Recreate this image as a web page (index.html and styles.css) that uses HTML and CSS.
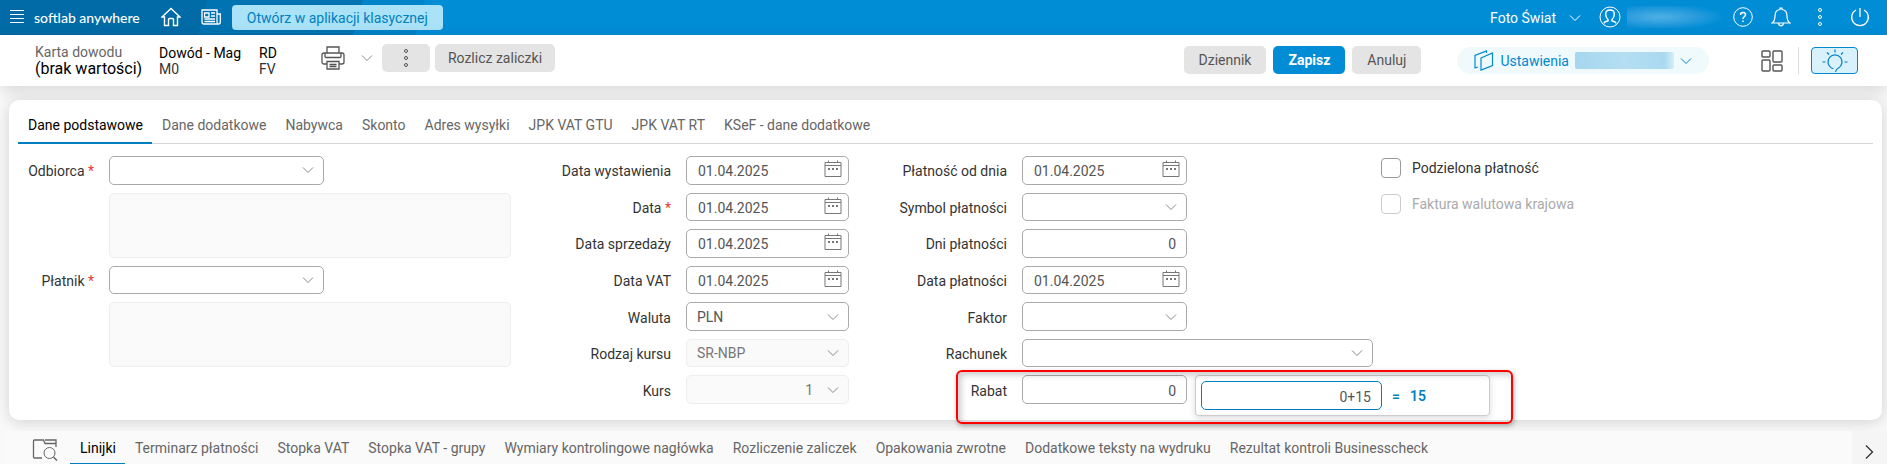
FILE: index.html
```
<!DOCTYPE html>
<html lang="pl">
<head>
    <meta charset="UTF-8">
    <meta name="viewport" content="width=device-width, initial-scale=1.0">
    <title>Karta dowodu - softlab anywhere</title>
    <link rel="stylesheet" href="styles.css">
</head>
<body>
    <!-- Shared icons -->
    <svg class="sprite" aria-hidden="true">
        <symbol id="chevron" viewBox="0 0 12 8"><path d="M1 1.5 L6 6.5 L11 1.5"/></symbol>
        <symbol id="calendar" viewBox="0 0 18 18">
            <path d="M1 2.5 H17 V16.5 H1 Z M1 5.5 H17 M4.5 0.5 V3 M13.5 0.5 V3"/>
            <path d="M4 9 H6 M8 9 H10 M12 9 H14" stroke-width="2"/>
        </symbol>
        <symbol id="dots" viewBox="0 0 6 20">
            <circle cx="3" cy="3" r="1.5"/><circle cx="3" cy="10" r="1.5"/><circle cx="3" cy="17" r="1.5"/>
        </symbol>
    </svg>

    <header class="topbar">
        <button class="icon-btn menu-btn" aria-label="Menu">
            <svg width="14" height="14" viewBox="0 0 14 14"><path d="M0 0.5 H14 M0 4.5 H14 M0 8.5 H14 M0 12.5 H14"/></svg>
        </button>
        <span class="brand">softlab anywhere</span>
        <button class="icon-btn home-btn" aria-label="Start">
            <svg width="20" height="20" viewBox="0 0 20 20"><path stroke-width="1.4" d="M1 10 L10 1.5 L19 10 H16.5 V18.5 H12.5 V12.5 Q12.5 11.5 11.5 11.5 H8.5 Q7.5 11.5 7.5 12.5 V18.5 H3.5 V10 Z"/></svg>
        </button>
        <button class="icon-btn news-btn" aria-label="Aktualności">
            <svg width="20" height="16" viewBox="0 0 20 16"><path stroke-width="1.3" d="M16 12 V1 H1 V13 Q1 15 3 15 H17.5 Q19.3 15 19.3 13 V5 H16 V13 Q16 15 17.5 15 M3.5 4 H8 V8 H3.5 Z M10 4 H14 M10 7 H14 M3.5 10 H14 M3.5 12.5 H14"/></svg>
        </button>
        <button class="classic-btn">Otwórz w aplikacji klasycznej</button>

        <div class="topbar-right">
            <button class="company-btn">Foto Świat <svg class="chevron"><use href="#chevron"/></svg></button>
            <button class="icon-btn user-btn" aria-label="Użytkownik">
                <svg width="22" height="22" viewBox="0 0 22 22"><circle cx="11" cy="11" r="10"/><path stroke-width="1.4" d="M5 17.5 Q5 16 7 15.5 L9 15 V13.5 Q6.7 11.5 6.7 8 Q6.7 4 11 4 Q15.3 4 15.3 8 Q15.3 11.5 13 13.5 V15 L15 15.5 Q17 16 17 17.5"/></svg>
                <span class="blurred user-name"></span>
            </button>
            <button class="icon-btn" aria-label="Pomoc">
                <svg width="20" height="20" viewBox="0 0 20 20"><circle cx="10" cy="10" r="9.3"/><path stroke-width="1.5" d="M7.5 8 Q7.5 5.5 10 5.5 Q12.5 5.5 12.5 7.7 Q12.5 9 11 10 Q10 10.8 10 12 M10 13.5 V15"/></svg>
            </button>
            <button class="icon-btn" aria-label="Powiadomienia">
                <svg width="20" height="20" viewBox="0 0 20 20"><path stroke-width="1.2" d="M1 16 Q4 14 4 9 Q4 3 9 2.5 V1 H11 V2.5 Q16 3 16 9 Q16 14 19 16 Z M7.5 16.5 Q8 18.8 10 18.8 Q12 18.8 12.5 16.5"/></svg>
            </button>
            <button class="icon-btn more-btn" aria-label="Więcej">
                <svg width="6" height="20"><use href="#dots"/></svg>
            </button>
            <button class="icon-btn" aria-label="Wyloguj">
                <svg width="20" height="20" viewBox="0 0 20 20"><path stroke-width="1.3" d="M6 3 A8.3 8.3 0 1 0 14 3 M10 1 V10"/></svg>
            </button>
        </div>
    </header>

    <div class="doc-header">
        <div class="doc-title">
            <span class="muted">Karta dowodu</span>
            <h1>(brak wartości)</h1>
        </div>
        <div class="doc-info">
            <strong>Dowód - Mag</strong>
            <span>M0</span>
        </div>
        <div class="doc-info">
            <strong>RD</strong>
            <span>FV</span>
        </div>
        <div class="doc-tools">
            <button class="icon-btn print-btn" aria-label="Drukuj">
                <svg width="24" height="24" viewBox="0 0 24 24"><path stroke-width="1.3" d="M6 7 V1 H18 V7 M6 18 H3 Q1 18 1 16 V9 Q1 7 3 7 H21 Q23 7 23 9 V16 Q23 18 21 18 H18 M4 7 V10.5 Q4 11.5 5 11.5 H19 Q20 11.5 20 10.5 V7 M6 15.5 H18 V23 H6 Z M8.5 18.5 H15.5 M8.5 20.5 H15.5"/></svg>
            </button>
            <button class="icon-btn print-more" aria-label="Opcje drukowania"><svg class="chevron"><use href="#chevron"/></svg></button>
            <button class="btn dots-btn" aria-label="Więcej akcji"><svg width="6" height="20"><use href="#dots"/></svg></button>
            <button class="btn settle-btn">Rozlicz zaliczki</button>
        </div>
        <div class="doc-actions">
            <button class="btn">Dziennik</button>
            <button class="btn btn-primary">Zapisz</button>
            <button class="btn">Anuluj</button>
        </div>
        <button class="settings-btn">
            <svg width="20" height="21" viewBox="0 0 20 21"><path stroke-width="1.2" d="M7 8 L18.5 3 V15.5 L7 20 Z M4 17 L1 18 V5.5 L12.5 1 V3"/></svg>
            Ustawienia
            <span class="blurred settings-name"></span>
            <svg class="chevron"><use href="#chevron"/></svg>
        </button>
        <button class="icon-btn layout-btn" aria-label="Układ">
            <svg width="22" height="22" viewBox="0 0 22 22"><path stroke-width="1.4" d="M2 1 H8 Q9 1 9 2 V6 Q9 7 8 7 H2 Q1 7 1 6 V2 Q1 1 2 1 Z M2 10 H8 Q9 10 9 11 V20 Q9 21 8 21 H2 Q1 21 1 20 V11 Q1 10 2 10 Z M13 1 H20 Q21 1 21 2 V11 Q21 12 20 12 H13 Q12 12 12 11 V2 Q12 1 13 1 Z M13 15 H20 Q21 15 21 16 V20 Q21 21 20 21 H13 Q12 21 12 20 V16 Q12 15 13 15 Z"/></svg>
        </button>
        <button class="hint-btn" aria-label="Podpowiedzi">
            <svg width="26" height="24" viewBox="0 0 26 24"><path stroke-width="1.2" d="M11 20 Q11 19.5 9.5 19 A7 7 0 1 1 16.5 19 Q14 20 13.5 23 M13 0.5 V3.5 M5 3.5 L7 5.5 M21 3.5 L19 5.5 M0.5 13 H3.5 M22.5 13 H25.5"/></svg>
        </button>
    </div>

    <main class="card">
        <nav class="tabs">
            <a href="#" class="active">Dane podstawowe</a>
            <a href="#">Dane dodatkowe</a>
            <a href="#">Nabywca</a>
            <a href="#">Skonto</a>
            <a href="#">Adres wysyłki</a>
            <a href="#">JPK VAT GTU</a>
            <a href="#">JPK VAT RT</a>
            <a href="#">KSeF - dane dodatkowe</a>
        </nav>

        <form class="form-columns">
            <div class="form-column parties">
                <label for="recipient">Odbiorca <em>*</em></label>
                <div class="field narrow">
                    <select id="recipient"><option></option></select>
                    <svg class="chevron"><use href="#chevron"/></svg>
                </div>
                <textarea class="address" aria-label="Dane odbiorcy" disabled></textarea>
                <label for="payer" class="payer-row">Płatnik <em>*</em></label>
                <div class="field narrow payer-row">
                    <select id="payer"><option></option></select>
                    <svg class="chevron"><use href="#chevron"/></svg>
                </div>
                <textarea class="address" aria-label="Dane płatnika" disabled></textarea>
            </div>

            <div class="form-column dates">
                <label for="issueDate">Data wystawienia</label>
                <div class="field">
                    <input type="text" id="issueDate" value="01.04.2025">
                    <svg class="calendar"><use href="#calendar"/></svg>
                </div>
                <label for="docDate">Data <em>*</em></label>
                <div class="field">
                    <input type="text" id="docDate" value="01.04.2025">
                    <svg class="calendar"><use href="#calendar"/></svg>
                </div>
                <label for="saleDate">Data sprzedaży</label>
                <div class="field">
                    <input type="text" id="saleDate" value="01.04.2025">
                    <svg class="calendar"><use href="#calendar"/></svg>
                </div>
                <label for="vatDate">Data VAT</label>
                <div class="field">
                    <input type="text" id="vatDate" value="01.04.2025">
                    <svg class="calendar"><use href="#calendar"/></svg>
                </div>
                <label for="currency">Waluta</label>
                <div class="field">
                    <select id="currency"><option>PLN</option></select>
                    <svg class="chevron"><use href="#chevron"/></svg>
                </div>
                <label for="rateType">Rodzaj kursu</label>
                <div class="field">
                    <select id="rateType" disabled><option>SR-NBP</option></select>
                    <svg class="chevron"><use href="#chevron"/></svg>
                </div>
                <label for="rate">Kurs</label>
                <div class="field">
                    <select id="rate" class="number" disabled><option>1</option></select>
                    <svg class="chevron"><use href="#chevron"/></svg>
                </div>
            </div>

            <div class="form-column payment">
                <label for="payFrom">Płatność od dnia</label>
                <div class="field short">
                    <input type="text" id="payFrom" value="01.04.2025">
                    <svg class="calendar"><use href="#calendar"/></svg>
                </div>
                <label for="paySymbol">Symbol płatności</label>
                <div class="field short">
                    <select id="paySymbol"><option></option></select>
                    <svg class="chevron"><use href="#chevron"/></svg>
                </div>
                <label for="payDays">Dni płatności</label>
                <div class="field short">
                    <input type="text" id="payDays" class="number" value="0">
                </div>
                <label for="payDate">Data płatności</label>
                <div class="field short">
                    <input type="text" id="payDate" value="01.04.2025">
                    <svg class="calendar"><use href="#calendar"/></svg>
                </div>
                <label for="factor">Faktor</label>
                <div class="field short">
                    <select id="factor"><option></option></select>
                    <svg class="chevron"><use href="#chevron"/></svg>
                </div>
                <label for="account">Rachunek</label>
                <div class="field">
                    <select id="account"><option></option></select>
                    <svg class="chevron"><use href="#chevron"/></svg>
                </div>
                <label for="discount">Rabat</label>
                <div class="field short">
                    <input type="text" id="discount" class="number" value="0">
                    <div class="calc-popup">
                        <input type="text" class="number" value="0+15" aria-label="Wyrażenie">
                        <span>=</span>
                        <output>15</output>
                    </div>
                    <div class="highlight"></div>
                </div>
            </div>

            <div class="form-column options">
                <label class="check"><input type="checkbox"> Podzielona płatność</label>
                <label class="check disabled"><input type="checkbox" disabled> Faktura walutowa krajowa</label>
            </div>
        </form>
    </main>

    <div class="bottom-bar">
        <button class="icon-btn preview-btn" aria-label="Podgląd">
            <svg width="26" height="22" viewBox="0 0 26 22"><path stroke-width="1.3" d="M10 19 H2.5 Q1.5 19 1.5 18 V2 Q1.5 1 2.5 1 H11.5 L13 4.5 H24 V8 M13 1 H24 V4.5"/><circle cx="17.5" cy="14" r="5.5"/><path stroke-width="1.5" d="M21.5 18 L25 21.5"/></svg>
        </button>
        <nav class="tabs">
            <a href="#" class="active">Linijki</a>
            <a href="#">Terminarz płatności</a>
            <a href="#">Stopka VAT</a>
            <a href="#">Stopka VAT - grupy</a>
            <a href="#">Wymiary kontrolingowe nagłówka</a>
            <a href="#">Rozliczenie zaliczek</a>
            <a href="#">Opakowania zwrotne</a>
            <a href="#">Dodatkowe teksty na wydruku</a>
            <a href="#">Rezultat kontroli Businesscheck</a>
        </nav>
        <button class="icon-btn next-btn" aria-label="Następne">
            <svg width="9" height="14" viewBox="0 0 9 14"><path stroke-width="1.3" d="M1 0.5 L7.5 7 L1 13.5"/></svg>
        </button>
    </div>
</body>
</html>
```
FILE: styles.css
```
* {
    margin: 0;
    padding: 0;
    box-sizing: border-box;
}

body {
    background-color: #f9f9f9;
    color: #333;
    font-family: Roboto, "Liberation Sans", sans-serif;
    font-size: 14px;
    line-height: 16px;
    height: 100vh;
    overflow: hidden;
}

button,
input,
select,
textarea {
    font: inherit;
    color: inherit;
}

button {
    border: none;
    background: none;
    cursor: pointer;
    white-space: nowrap;
}

svg {
    display: block;
    flex: none;
    fill: none;
    stroke: currentColor;
}

.sprite {
    position: absolute;
    width: 0;
    height: 0;
}

.chevron {
    width: 12px;
    height: 8px;
}

.icon-btn {
    display: flex;
    align-items: center;
}

/* Top bar */
.topbar {
    display: flex;
    align-items: center;
    height: 35px;
    padding: 0 17px 6px 10px;
    background: linear-gradient(105deg, #006ba6 0, #006ba6 200px, #0073b2 201px, #0073b2 350px, #0083c8 351px, #0083c8 410px, #008dd6 411px);
    color: white;
}

.menu-btn {
    margin-top: 4px;
}

.brand {
    margin: 6px 21px 0 10px;
    font-family: Lato, sans-serif;
    font-size: 14px;
    font-weight: 500;
}

.home-btn,
.news-btn {
    margin-top: 4px;
}

.news-btn {
    margin-left: 20px;
}

.classic-btn {
    height: 25px;
    margin: 6px 0 0 11px;
    padding: 0 15px;
    border-radius: 4px;
    background-color: #aae2f7;
    color: #0080c0;
    font-weight: 450;
}

.topbar-right {
    display: flex;
    align-items: center;
    margin-left: auto;
    gap: 18px;
    padding-top: 4px;
}

.company-btn {
    display: flex;
    align-items: center;
    gap: 13px;
    padding-top: 2px;
}

.user-btn {
    gap: 6px;
}

.blurred {
    display: block;
    border-radius: 2px;
}

.user-name {
    width: 94px;
    height: 22px;
    margin-right: -6px;
    background: radial-gradient(ellipse 70% 60% at 35% 50%, #4fb0e5, #2c9ddd 50%, #008dd6);
}

.more-btn {
    padding: 0 9px 0 8px;
}

/* Document header */
.doc-header {
    display: flex;
    position: relative;
    height: 51px;
    padding: 9px 29px 0 35px;
    background-color: white;
    box-shadow: 0 4px 16px rgba(0, 0, 0, 0.14);
    color: #555;
}

.doc-title {
    width: 124px;
}

.doc-title h1 {
    color: black;
    font-size: 16px;
    line-height: 18px;
    font-weight: 450;
    white-space: nowrap;
}

.muted {
    display: block;
    font-weight: 450;
    color: #666;
}

.doc-info {
    display: flex;
    flex-direction: column;
    padding-top: 1px;
    margin-right: 18px;
    color: #333;
}

.doc-info strong {
    color: black;
    font-weight: 450;
}

.doc-tools,
.doc-actions {
    display: flex;
    align-items: flex-start;
}

.doc-tools {
    margin-left: 26px;
}

.print-btn {
    height: 28px;
}

.print-more {
    height: 28px;
    margin: 0 9px 0 16px;
    color: #888;
}

.btn {
    height: 28px;
    padding: 0 15px;
    border-radius: 5px;
    background-color: #e4e4e4;
    color: #555;
    font-weight: 450;
}

.dots-btn {
    padding: 0 21px;
    margin-right: 5px;
}

.settle-btn {
    padding: 0 13px;
}

.doc-actions {
    gap: 7px;
    margin-left: auto;
    padding-top: 2px;
}

.btn-primary {
    background-color: #008dd6;
    color: white;
    font-weight: 700;
}

.settings-btn {
    display: flex;
    align-items: center;
    gap: 6px;
    height: 27px;
    margin: 3px 52px 0 36px;
    padding: 0 17px;
    border-radius: 14px;
    background-color: #f0fafd;
    color: #0088d0;
    font-weight: 450;
}

.settings-name {
    width: 99px;
    height: 17px;
    background: linear-gradient(90deg, #a5d7ef, #b5def2 50%, #a9d9f0 90%, #d5eef9);
}

.layout-btn {
    height: 27px;
    margin-top: 3px;
    padding-right: 15px;
    border-right: 1px solid #ddd;
}

.hint-btn {
    display: flex;
    align-items: center;
    justify-content: center;
    width: 47px;
    height: 27px;
    margin: 3px 0 0 12px;
    border: 1px solid #0088d0;
    border-radius: 4px;
    background-color: #d8f1fb;
    color: #0080c0;
}

/* Tabs */
.tabs {
    display: flex;
}

.tabs a {
    padding: 0 9px 0 10px;
    color: #666;
    font-weight: 450;
    text-decoration: none;
    white-space: nowrap;
}

.tabs a.active {
    color: black;
    border-bottom: 2px solid #007fc0;
}

/* Form card */
.card {
    margin: 14px 5px 0 9px;
    padding: 0 9px 16px;
    border-radius: 10px;
    background-color: white;
    box-shadow: 0 2px 16px rgba(0, 0, 0, 0.16);
    position: relative;
}

.card .tabs {
    height: 44px;
    border-bottom: 1px solid #d5d5d5;
    line-height: 51px;
}

.card .tabs a {
    height: 44px;
}

.form-columns {
    display: grid;
    grid-template-columns: 493fr 338fr 524fr 500fr;
    padding-top: 12px;
}

.form-column {
    display: grid;
    grid-template-columns: 1fr 163px;
    grid-template-rows: repeat(7, 1fr);
    gap: 8px 15px;
    min-height: 248px;
}

.form-column label {
    align-self: center;
    padding-top: 2px;
    text-align: right;
    font-weight: 450;
    white-space: nowrap;
}

.form-column em {
    color: #e53935;
    font-style: normal;
}

.form-column.parties {
    grid-template-columns: 76px 1fr;
}

.form-column.payment {
    grid-template-columns: 158px 1fr;
}

.payer-row {
    grid-row: 4;
}

.field {
    display: flex;
    align-items: center;
    position: relative;
}

.field.narrow {
    width: 215px;
}

.field.short {
    width: 165px;
}

.field input,
.field select {
    width: 100%;
    height: 100%;
    min-height: 28px;
    padding: 0 10px;
    border: 1px solid #aaa;
    border-radius: 5px;
    background-color: white;
    color: #555;
    appearance: none;
    outline: none;
}

.field input {
    padding: 2px 10px 0 11px;
}

.field select:disabled,
.address {
    border-color: #eee;
    background-color: #fafafa;
    color: #777;
    opacity: 1;
}

.field .number {
    text-align: right;
}

.field select.number {
    padding-right: 35px;
    text-align-last: right;
}

/* Icons lying over the right end of a field */
.field > svg {
    position: absolute;
    pointer-events: none;
    color: #888;
}

.field > .chevron {
    right: 10px;
}

.field > .calendar {
    width: 18px;
    height: 18px;
    top: 4px;
    right: 7px;
    color: #777;
}

.address {
    grid-column: 2;
    grid-row: 2 / span 2;
    border-width: 1px;
    border-style: solid;
    border-radius: 5px;
    resize: none;
}

.payer-row + .address {
    grid-row: 5 / span 2;
}

/* Calculator opened next to the discount field */
.calc-popup {
    display: flex;
    align-items: center;
    gap: 10px;
    position: absolute;
    top: 0;
    left: 173px;
    width: 295px;
    height: 41px;
    padding: 0 5px;
    border: 1px solid #ccc;
    border-radius: 4px;
    background-color: white;
    box-shadow: 0 2px 6px rgba(0, 0, 0, 0.15);
    color: #007fc0;
    font-weight: 600;
}

.calc-popup input {
    width: 181px;
    height: 29px;
    border-color: #007fc0;
    font-weight: 400;
}

.highlight {
    position: absolute;
    top: -5px;
    left: -66px;
    width: 557px;
    height: 54px;
    border: 2px solid #f00;
    border-radius: 6px;
    box-shadow: 1px 2px 5px rgba(0, 0, 0, 0.3), inset 3px 3px 6px rgba(0, 0, 0, 0.2);
    pointer-events: none;
}

.form-column.options {
    display: flex;
    flex-direction: column;
    gap: 16px;
    padding: 2px 0 0 8px;
}

.form-column .check {
    display: flex;
    align-items: center;
    align-self: flex-start;
    gap: 11px;
    padding-top: 0;
    font-weight: 400;
}

.check input {
    width: 20px;
    height: 20px;
    border: 1px solid #999;
    border-radius: 4px;
    background-color: white;
    appearance: none;
}

.form-column .check.disabled {
    color: #aaa;
}

.check.disabled input {
    border-color: #ccc;
}

/* Bottom bar */
.bottom-bar {
    display: flex;
    position: relative;
    height: 34px;
    margin: 11px 0 0 3px;
    background-color: #fafafa;
}

.preview-btn {
    padding: 4px 12px 0 29px;
    color: #666;
}

.bottom-bar .tabs {
    flex: 1;
    line-height: 35px;
}

.next-btn {
    justify-content: center;
    width: 35px;
    padding-top: 8px;
    background-color: #f5f5f5;
    color: #333;
}
```
